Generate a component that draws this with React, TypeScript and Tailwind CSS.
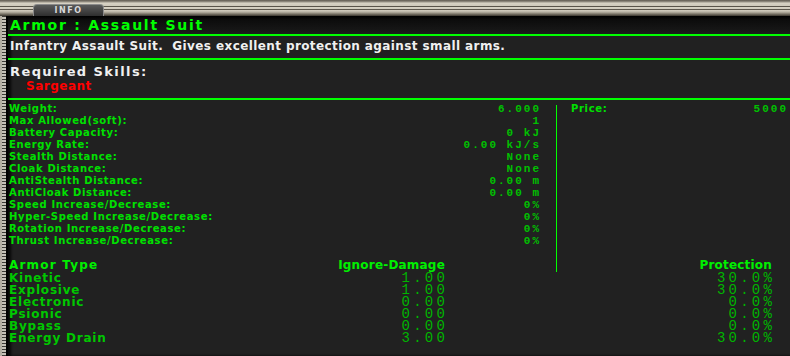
const stats: [string, string][] = [
  ["Weight:", "6.000"],
  ["Max Allowed(soft):", "1"],
  ["Battery Capacity:", "0 kJ"],
  ["Energy Rate:", "0.00 kJ/s"],
  ["Stealth Distance:", "None"],
  ["Cloak Distance:", "None"],
  ["AntiStealth Distance:", "0.00 m"],
  ["AntiCloak Distance:", "0.00 m"],
  ["Speed Increase/Decrease:", "0%"],
  ["Hyper-Speed Increase/Decrease:", "0%"],
  ["Rotation Increase/Decrease:", "0%"],
  ["Thrust Increase/Decrease:", "0%"],
];

const armor: [string, string, string][] = [
  ["Kinetic", "1.00", "30.0%"],
  ["Explosive", "1.00", "30.0%"],
  ["Electronic", "0.00", "0.0%"],
  ["Psionic", "0.00", "0.0%"],
  ["Bypass", "0.00", "0.0%"],
  ["Energy Drain", "3.00", "30.0%"],
];

const sans = "font-['DejaVu_Sans',sans-serif]";
const mono = "font-['Liberation_Mono',monospace]";

function GreenLine() {
  return <div className="h-[2px] bg-[#00ff00]" />;
}

export default function App() {
  return (
    <div className="w-[790px] h-[356px] overflow-hidden flex flex-col bg-[#212121]">
      {/* stone frame */}
      <div className="h-[16px] shrink-0 flex bg-[linear-gradient(to_bottom,#5f594f_0px,#9a9488_2px,#d8d2c4_3px,#cec8ba_6px,#5a544a_6px,#5a544a_7px,#d8d2c4_7px,#d0cabc_9px,#5e584e_9px,#5e584e_10px,#d4cec0_10px,#b9b3a5_12px,#7a7468_14px,#3a362e_16px)]">
        <div className="ml-[33px] mt-[4px] w-[71px] h-[12px] rounded-t-[4px] border border-b-0 border-[#8a8a8a] bg-[linear-gradient(to_bottom,#5a5a5a,#2e2e2e)] flex items-center justify-center">
          <span className={`${sans} text-[8px] font-bold leading-[10px] tracking-[1.5px] text-[#d8d8d8]`}>INFO</span>
        </div>
      </div>

      <div className="flex flex-1">
        {/* left frame edge */}
        <div className="w-[8px] shrink-0 flex bg-[#b4afa3]">
          <div className="w-[2px]" />
          <div className="w-[4px] bg-[repeating-linear-gradient(to_bottom,#3c3a36_0px,#3c3a36_1px,#c6c2b8_1px,#c6c2b8_3px)]" />
          <div className="w-[2px] bg-black" />
        </div>

        <div className="flex-1 flex flex-col bg-[#212121] rounded-tl-[4px] shadow-[inset_3px_0_3px_rgba(0,0,0,0.8)]">
          <div className="h-[18px] pl-[2px] bg-[linear-gradient(to_bottom,#000000,#0c0c0c_20%,#1a1a1a)]">
            <div className={`${sans} text-[14px] font-bold leading-[18px] tracking-[1.75px] text-[#00ff00]`}>Armor : Assault Suit</div>
          </div>
          <GreenLine />
          <div className="h-[22px] pl-[2px]">
            <div className={`${sans} text-[12px] font-bold leading-[20px] tracking-[0.4px] text-[#f0f0f0] whitespace-pre`}>
              Infantry Assault Suit.  Gives excellent protection against small arms.
            </div>
          </div>
          <GreenLine />
          <div className="h-[38px] pl-[2px] pt-[4px]">
            <div className={`${sans} text-[13px] font-bold leading-[16px] tracking-[1.4px] text-[#f0f0f0]`}>Required Skills:</div>
            <div className={`${sans} text-[12px] font-bold leading-[12px] tracking-[0.5px] text-[#ff0000] pl-[16px]`}>Sargeant</div>
          </div>
          <GreenLine />

          <div className="flex">
            <div className="w-[548px] pl-[1px] pt-[3px]">
              {stats.map(([k, v]) => (
                <div key={k} className="flex justify-between h-[12px] pr-[15px]">
                  <span className={`${sans} text-[10px] font-bold leading-[12px] tracking-[0.65px] text-[#00e000]`}>{k}</span>
                  <span className={`${mono} text-[11px] font-bold leading-[12px] tracking-[2px] text-[#00c000]`}>{v}</span>
                </div>
              ))}
              <div className="mt-[12px] h-[13px] w-[436px] flex justify-between">
                <span className={`${sans} text-[12px] font-bold leading-[12px] tracking-[1.2px] text-[#00f000]`}>Armor Type</span>
                <span className={`${sans} text-[12px] font-bold leading-[12px] tracking-[0.2px] text-[#00f000]`}>Ignore-Damage</span>
              </div>
            </div>
            <div className="w-px mt-[5px] bg-[#00ff00]" />
            <div className="flex-1 flex flex-col pt-[3px] pl-[14px] pr-[2px]">
              <div className="flex justify-between h-[12px]">
                <span className={`${sans} text-[10px] font-bold leading-[12px] tracking-[0.65px] text-[#00e000]`}>Price:</span>
                <span className={`${mono} text-[11px] font-bold leading-[12px] tracking-[2px] text-[#00c000]`}>5000</span>
              </div>
              <div className={`${sans} mt-auto h-[13px] pr-[16px] text-right text-[12px] font-bold leading-[12px] tracking-[0.2px] text-[#00f000]`}>
                Protection
              </div>
            </div>
          </div>

          <div className="pl-[1px]">
            {armor.map(([name, ign, prot]) => (
              <div key={name} className="grid grid-cols-[300px_139px_327px] h-[12px]">
                <span className={`${sans} text-[12px] font-bold leading-[12px] tracking-[0.8px] text-[#00c800]`}>{name}</span>
                <span className={`${mono} text-[14px] leading-[12px] tracking-[3.2px] text-right text-[#00b400]`}>{ign}</span>
                <span className={`${mono} text-[14px] leading-[12px] tracking-[3.2px] text-right text-[#00b400]`}>{prot}</span>
              </div>
            ))}
          </div>
        </div>
      </div>
    </div>
  );
}
